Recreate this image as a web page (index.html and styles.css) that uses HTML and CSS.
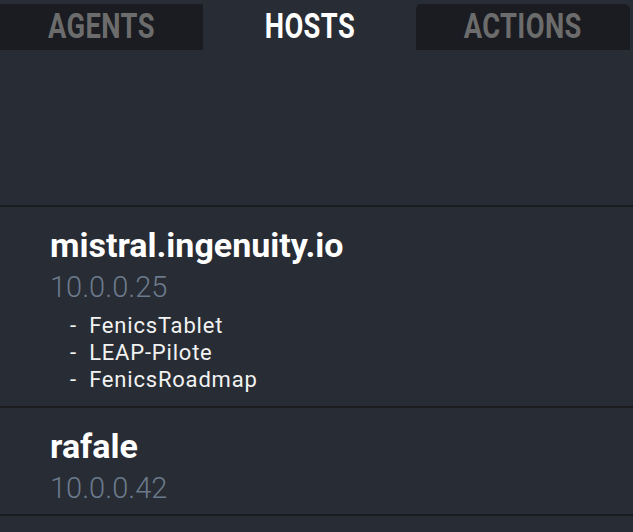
FILE: index.html
```html
<!DOCTYPE html>
<html>
<head>
<meta charset="utf-8">
<link rel="stylesheet" href="styles.css">
</head>
<body>
<div class="app">
  <nav class="tabs">
    <div class="tab tab-first"><span class="tab-label">AGENTS</span></div>
    <div class="tab tab-active"><span class="tab-label">HOSTS</span></div>
    <div class="tab tab-last"><span class="tab-label">ACTIONS</span></div>
  </nav>
  <div class="spacer"></div>
  <ul class="hosts">
    <li class="host host-first">
      <div class="host-name">mistral.ingenuity.io</div>
      <div class="host-ip">10.0.0.25</div>
      <ul class="agents">
        <li>- FenicsTablet</li>
        <li>- LEAP-Pilote</li>
        <li>- FenicsRoadmap</li>
      </ul>
    </li>
    <li class="host">
      <div class="host-name">rafale</div>
      <div class="host-ip">10.0.0.42</div>
    </li>
  </ul>
</div>
</body>
</html>
```
FILE: styles.css
```css
html, body {
  margin: 0;
  padding: 0;
  background: #282c34;
}
body {
  font-family: Roboto, "Liberation Sans", sans-serif;
  color: #ffffff;
  width: 633px;
  height: 532px;
  overflow: hidden;
}
.app {
  display: flex;
  flex-direction: column;
}
.tabs {
  display: grid;
  grid-template-columns: 203px 213px 214px;
  padding-top: 4px;
  margin-right: 3px;
  height: 46px;
}
.tab {
  background: #1a1c21;
  display: flex;
  align-items: center;
  justify-content: center;
}
.tab-last {
  border-radius: 5px 6px 0 0;
}
.tab-active {
  background: #282c34;
}
.tab-label {
  display: inline-block;
  font-weight: 700;
  font-size: 35px;
  line-height: 46px;
  color: #6c6c6c;
  transform: scaleX(0.78);
  letter-spacing: 0.5px;
}
.tab-active .tab-label {
  color: #ffffff;
}
.spacer {
  height: 155px;
}
.hosts {
  list-style: none;
  margin: 0;
  padding: 0;
}
.host {
  border-top: 2px solid #1a1c20;
  padding: 18px 0 4px 50px;
}
.host-first {
  padding-bottom: 13px;
}
.host + .host {
  border-bottom: 2px solid #1a1c20;
}
.host-name {
  font-weight: 700;
  font-size: 34px;
  line-height: 40px;
}
.host-ip {
  font-weight: 300;
  font-size: 29px;
  line-height: 44px;
  color: #6b7a8c;
}
.agents {
  list-style: none;
  margin: 3px 0 0 0;
  padding: 0 0 0 20px;
}
.agents li {
  font-size: 22px;
  line-height: 27px;
  color: #f2f2f2;
  letter-spacing: 0.8px;
  word-spacing: 6px;
}
```
